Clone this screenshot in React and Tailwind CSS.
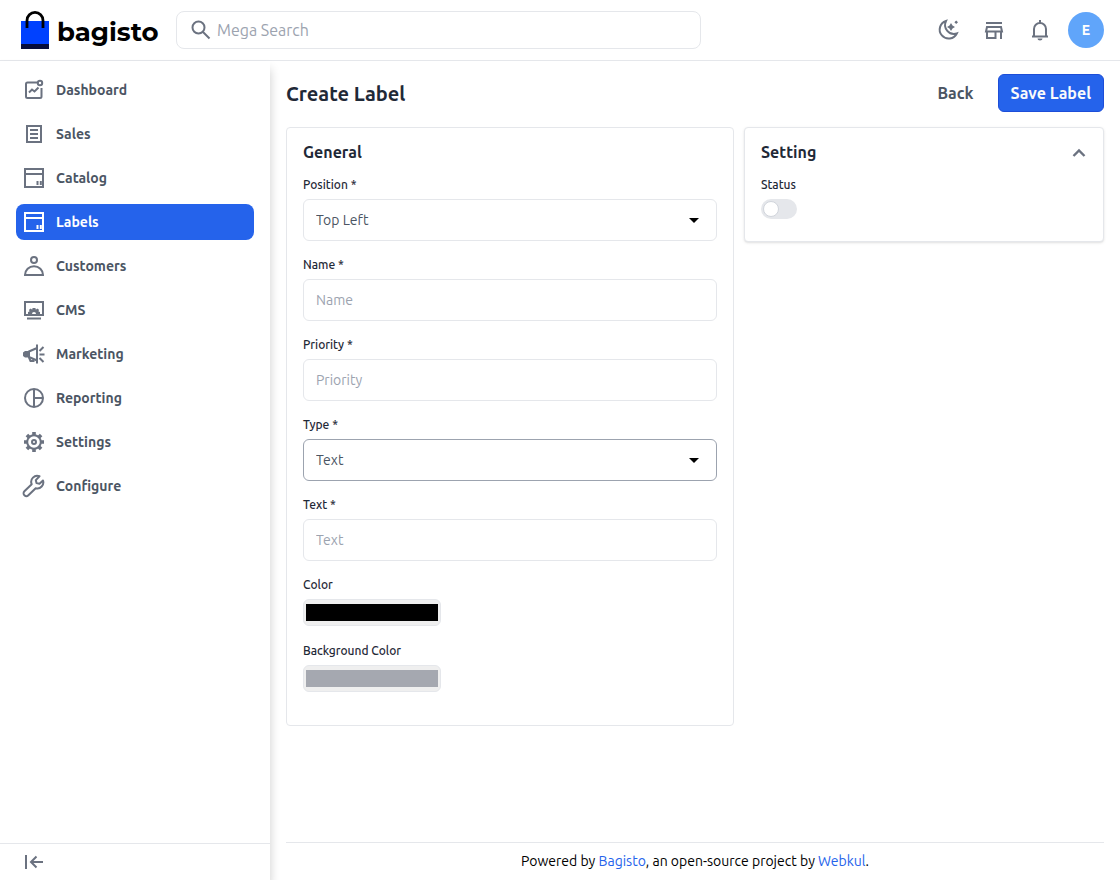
import { useState } from "react";

const iconProps = { viewBox: "0 0 24 24", fill: "none", stroke: "currentColor", strokeWidth: 2, "aria-hidden": true };

const icons = {
    dashboard: (
        <>
            <path d="M15 4.400H5.500Q4 4.400 4 6v12.500Q4 20 5.500 20H18q1.500 0 1.500-1.500V10" />
            <path d="M7 14.500l3-3 2.500 2 4-4" />
            <circle cx="18" cy="5" r="2.200" />
        </>
    ),
    sales: (
        <>
            <path d="M5 4h14v16H5z" />
            <path d="M8 8h8M8 12h8M8 16h8" />
        </>
    ),
    box: (
        <>
            <path d="M3 3h18v18H3zM3 8h18" />
            <path d="M15.500 15v4M18.800 15v4" />
        </>
    ),
    customers: (
        <>
            <circle cx="12" cy="6" r="3" />
            <path d="M3 21a9 8.800 0 0 1 18 0z" />
        </>
    ),
    cms: (
        <>
            <path d="M3 4h18v13H3zM5 20.500h14" />
            <path stroke="none" fill="currentColor" d="M6 16v-2l1.500-.5-.5-1.700 1.800-1.200 1.300 1.200.5-1.800h2.800l.5 1.800 1.300-1.200 1.800 1.200-.5 1.700 1.500.5v2h-4a2 2 0 0 0-4 0z" />
        </>
    ),
    marketing: (
        <>
            <path d="M15 2.500v19M15 6L7 9.500v5.500l8 3.500" />
            <path stroke="none" fill="currentColor" d="M1 10.500L3 9h4.500v6.500H3L1 14z" />
            <path d="M7 15.500l1.500 3.500h3v-2M17.500 9l4-4M17.500 12.500h5M17.500 16l4 4" />
        </>
    ),
    reporting: (
        <>
            <circle cx="12" cy="12" r="9" />
            <path d="M12 3v18M12 12h9" />
        </>
    ),
    settings: (
        <>
            <circle cx="12" cy="12" r="6.800" />
            <circle cx="12" cy="12" r="2" />
            <path strokeWidth={3.6} d="M12 2v3.500M12 18.500V22M2 12h3.500M18.500 12H22M4.900 4.900l2.300 2.300M16.800 16.800l2.300 2.300M4.900 19.100l2.300-2.300M16.800 7.200l2.300-2.300" />
        </>
    ),
    configure: (
        <path strokeLinejoin="round" d="M21 6.500l-3.500 3.300-3-.7-.7-3L17.500 2.300a6 6 0 0 0-7.800 7.900L2.400 17.300a2.800 2.800 0 0 0 4 4l7.300-7.100a6 6 0 0 0 7.300-7.700z" />
    ),
    collapse: <path d="M4 5v14M21 12H9M14.500 6.500L9 12l5.500 5.500" />,
    search: (
        <>
            <circle cx="9.500" cy="9.500" r="6" />
            <path d="M14 14l6.500 6.500" />
        </>
    ),
    moon: (
        <>
            <path d="M10 3a9 9 0 1 0 10.800 12.500A9 9 0 0 1 10 3z" />
            <path stroke="none" fill="currentColor" d="M15 5l1.500 2.500L19 9l-2.500 1.500L15 13l-1.500-2.500L11 9l2.500-1.500zM20.200 2.500L22 4.300l-1.800 1.800-1.800-1.800z" />
        </>
    ),
    store: <path d="M4 5h16M5 9h14l1 4.500H4zM5 13.500V20h8.500v-6.500M19 13.500V21" />,
    bell: (
        <>
            <path d="M4 18.500h16M6 18.500V11a6 6 0 0 1 12 0v7.500M12 5V2" />
            <path stroke="none" fill="currentColor" d="M9.500 20.500h5a2.500 2 0 0 1-5 0z" />
        </>
    ),
    chevron: <path strokeWidth={2.4} d="M6.500 16l5.500-5.500 5.500 5.500" />,
};

function Icon({ name, className = "size-6" }) {
    return <svg {...iconProps} className={className}>{icons[name]}</svg>;
}

const menu = [
    { label: "Dashboard", icon: "dashboard" },
    { label: "Sales", icon: "sales" },
    { label: "Catalog", icon: "box" },
    { label: "Labels", icon: "box", active: true },
    { label: "Customers", icon: "customers" },
    { label: "CMS", icon: "cms" },
    { label: "Marketing", icon: "marketing" },
    { label: "Reporting", icon: "reporting" },
    { label: "Settings", icon: "settings" },
    { label: "Configure", icon: "configure" },
];

const labelClass = "block text-xs font-medium text-[#1f2937] mb-1.5";
const controlClass = "w-full h-[42px] px-3 text-sm text-[#4b5563] bg-white border rounded-md outline-none placeholder:text-[#9ca3af]";

function SelectField({ id, label, options, value, onChange, focused }) {
    return (
        <div className="mb-4">
            <label htmlFor={id} className={labelClass}>{label} *</label>
            <div className="relative">
                <select id={id} value={value} onChange={e => onChange(e.target.value)}
                    className={`${controlClass} appearance-none ${focused ? "border-[#9ca3af]" : "border-gray-200"}`}>
                    {options.map(o => <option key={o}>{o}</option>)}
                </select>
                <svg viewBox="0 0 10 5" className="absolute right-[18px] top-[19px] w-2.5 h-[5px] pointer-events-none" aria-hidden="true">
                    <path d="M0 0h10L5 5z" />
                </svg>
            </div>
        </div>
    );
}

function TextField({ id, label }) {
    return (
        <div className="mb-4">
            <label htmlFor={id} className={labelClass}>{label} *</label>
            <input id={id} type="text" placeholder={label} className={`${controlClass} border-gray-200`} />
        </div>
    );
}

function ColorField({ id, label, defaultValue }) {
    return (
        <div className="mb-[17px]">
            <label htmlFor={id} className={labelClass}>{label}</label>
            <input id={id} type="color" defaultValue={defaultValue}
                className="block w-[138px] h-[27px] bg-[#efefef] border border-gray-200 rounded-md [&::-webkit-color-swatch]:border-0" />
        </div>
    );
}

export default function App() {
    const [position, setPosition] = useState("Top Left");
    const [type, setType] = useState("Text");
    const [open, setOpen] = useState(true);

    return (
        <div className="min-h-screen flex flex-col bg-white font-['Ubuntu','Noto_Sans',sans-serif]">
            {/* Top bar */}
            <header className="h-[61px] flex items-center justify-between pl-5 pr-4 border-b border-gray-200">
                <div className="flex-1 flex items-center gap-4">
                    <a href="#" className="w-[140px] flex items-center gap-2 text-black">
                        <svg viewBox="0 0 28 38" className="w-7 h-[38px] ml-px shrink-0" aria-hidden="true">
                            <path fill="#0041ff" d="M0 10h28v24H0z" />
                            <path fill="#060c3b" d="M0 33h28v5H0z" />
                            <path fill="none" stroke="#000" strokeWidth="2.800" d="M6 17V9.400a8 8 0 0 1 16 0V17" />
                        </svg>
                        <span className="font-['Montserrat','Inter',sans-serif] pt-1 text-[26px] leading-8 font-bold">bagisto</span>
                    </a>
                    <label className="w-full max-w-[525px] h-[38px] flex items-center gap-1 px-3 border border-gray-200 rounded-lg text-[#6b7280]">
                        <Icon name="search" className="size-6 shrink-0" />
                        <input type="text" placeholder="Mega Search" aria-label="Mega Search"
                            className="w-full text-base text-[#4b5563] outline-none placeholder:text-[#9ca3af]" />
                    </label>
                </div>
                <div className="flex items-center gap-[22px] text-[#6b7280]">
                    <button aria-label="Dark mode"><Icon name="moon" className="block size-6" /></button>
                    <a href="#" aria-label="Visit shop"><Icon name="store" className="block size-6" /></a>
                    <button aria-label="Notifications"><Icon name="bell" className="block size-6" /></button>
                    <button className="size-9 -ml-1.5 rounded-full bg-[#60a5fa] text-white text-sm font-bold">E</button>
                </div>
            </header>

            <div className="flex-1 flex">
                {/* Sidebar */}
                <aside className="w-[270px] shrink-0 flex flex-col justify-between shadow-[0_8px_10px_0_rgba(0,0,0,0.2)]">
                    <nav className="flex flex-col gap-2 px-4 pt-[11px]">
                        {menu.map(m => (
                            <a key={m.label} href="#"
                                className={`h-9 flex items-center gap-2.5 px-1.5 rounded-lg ${m.active ? "bg-[#2563eb] text-white" : "text-[#6b7280]"}`}>
                                <Icon name={m.icon} />
                                <span className={`text-sm font-bold ${m.active ? "text-white" : "text-[#4b5563]"}`}>{m.label}</span>
                            </a>
                        ))}
                    </nav>
                    <button aria-label="Collapse" className="h-[37px] px-[22px] border-t border-gray-200 text-[#6b7280]">
                        <Icon name="collapse" />
                    </button>
                </aside>

                <main className="flex-1 flex flex-col px-4 pt-[13px]">
                    <div className="flex items-center justify-between mb-[15px]">
                        <h1 className="pt-0.5 text-xl font-bold text-[#1f2937]">Create Label</h1>
                        <div className="flex items-center gap-3">
                            <a href="#" className="px-3 py-1.5 font-bold text-[#4b5563]">Back</a>
                            <button className="h-[38px] px-3 bg-[#2563eb] border border-[#1d4ed8] rounded-md font-bold text-gray-50">Save Label</button>
                        </div>
                    </div>

                    <div className="flex items-start gap-2.5">
                        <section className="flex-1 px-4 pt-3 pb-4 bg-white border border-gray-200 rounded-sm">
                            <h2 className="font-bold text-[#1f2937] mb-[13px]">General</h2>
                            <SelectField id="position" label="Position" value={position} onChange={setPosition}
                                options={["Top Left", "Top Right", "Bottom Left", "Bottom Right"]} />
                            <TextField id="name" label="Name" />
                            <TextField id="priority" label="Priority" />
                            <SelectField id="type" label="Type" value={type} onChange={setType} options={["Text", "Image"]} focused />
                            <TextField id="text" label="Text" />
                            <ColorField id="color" label="Color" defaultValue="#000000" />
                            <ColorField id="background" label="Background Color" defaultValue="#a5a8b0" />
                        </section>

                        <section className="w-[360px] px-4 pt-3 pb-1.5 bg-white border border-gray-200 rounded-sm shadow">
                            <div className="flex items-center justify-between mb-[13px]">
                                <h2 className="font-bold text-[#1f2937]">Setting</h2>
                                <button aria-label="Toggle section" onClick={() => setOpen(!open)} className="-mr-1 text-[#6b7280]">
                                    <Icon name="chevron" className="block size-6" />
                                </button>
                            </div>
                            {open && (
                                <div className="mb-4">
                                    <label htmlFor="status" className={labelClass}>Status</label>
                                    <input id="status" type="checkbox"
                                        className="appearance-none block w-9 h-5 p-0.5 rounded-full bg-gray-200 checked:bg-[#2563eb] before:block before:size-4 before:rounded-full before:bg-white before:border before:border-gray-300 checked:before:translate-x-4" />
                                </div>
                            )}
                        </section>
                    </div>

                    <footer className="mt-auto h-[38px] pb-0.5 flex items-center justify-center border-t border-gray-200 text-sm text-black">
                        <p>
                            Powered by <a href="#" className="text-[#2563eb]">Bagisto</a>, an open-source project by <a href="#" className="text-[#2563eb]">Webkul</a>.
                        </p>
                    </footer>
                </main>
            </div>
        </div>
    );
}
